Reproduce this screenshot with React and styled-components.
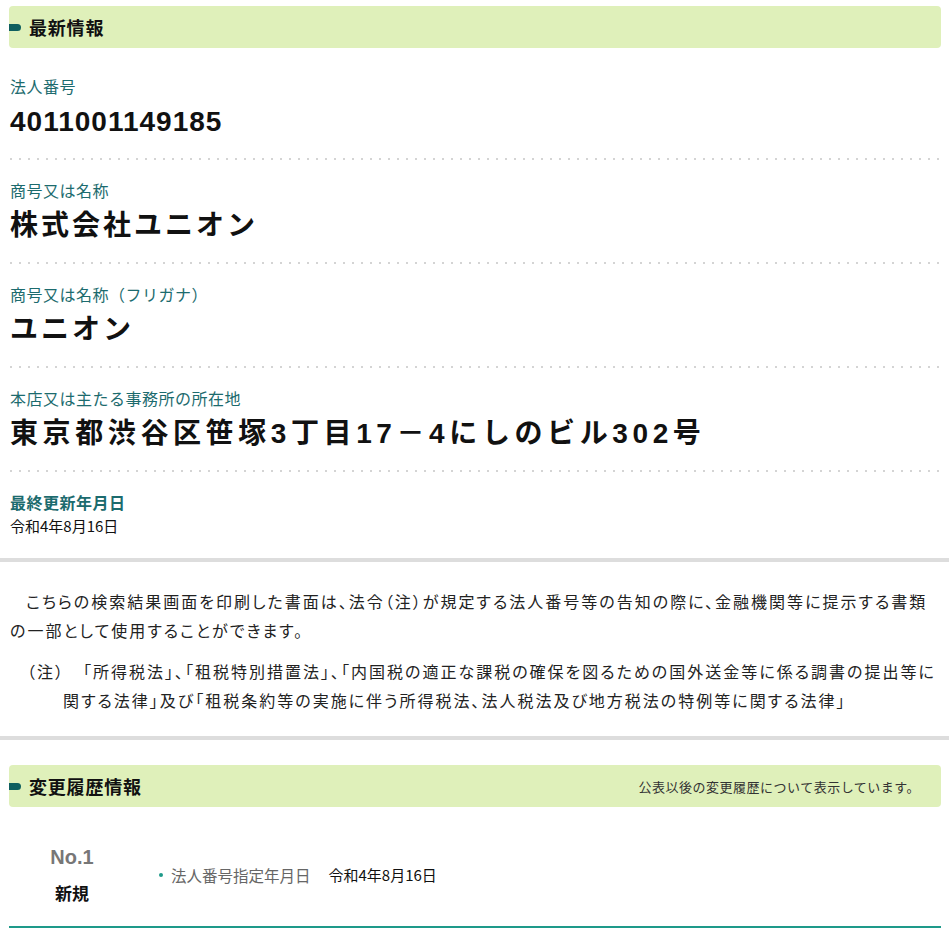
import React from "react";
import styled, { createGlobalStyle } from "styled-components";

// Global
const GlobalStyle = createGlobalStyle`
    body {
        margin: 0;
        background: #fff;
        color: #111;
        font-family: "Noto Sans CJK JP", sans-serif;
    }
`;

const fields = [
    { label: "法人番号", value: "4011001149185", spacing: 1 },
    { label: "商号又は名称", value: "株式会社ユニオン", spacing: 3 },
    { label: "商号又は名称（フリガナ）", value: "ユニオン", spacing: 3 },
    {
        label: "本店又は主たる事務所の所在地",
        value: "東京都渋谷区笹塚3丁目17－4にしのビル302号",
        spacing: 4.6,
    },
];

const App = () => {
    return (
        <>
            <GlobalStyle />
            <Page>
                <Section>
                    <SectionHead>
                        <Marker />
                        <HeadTitle>最新情報</HeadTitle>
                    </SectionHead>

                    <FieldList>
                        {fields.map((field) => (
                            <Field key={field.label}>
                                <Label>{field.label}</Label>
                                <Value $spacing={field.spacing}>{field.value}</Value>
                            </Field>
                        ))}
                        <Field $last>
                            <Label $bold>最終更新年月日</Label>
                            <DateText>令和4年8月16日</DateText>
                        </Field>
                    </FieldList>
                </Section>

                <Divider />

                <Notice>
                    <Lead>
                        こちらの検索結果画面を印刷した書面は、法令（注）が規定する法人番号等の告知の際に、金融機関等に提示する書類
                        <br />
                        の一部として使用することができます。
                    </Lead>
                    <Note>
                        （注）　「所得税法」、「租税特別措置法」、「内国税の適正な課税の確保を図るための国外送金等に係る調書の提出等に
                        <br />
                        関する法律」及び「租税条約等の実施に伴う所得税法、法人税法及び地方税法の特例等に関する法律」
                    </Note>
                </Notice>

                <Divider />

                <Section $top={25}>
                    <SectionHead>
                        <Marker />
                        <HeadTitle>変更履歴情報</HeadTitle>
                        <HeadNote>公表以後の変更履歴について表示しています。</HeadNote>
                    </SectionHead>

                    <HistoryRow>
                        <HistoryNo>
                            <NoText>No.1</NoText>
                            <KindText>新規</KindText>
                        </HistoryNo>
                        <HistoryItems>
                            <HistoryItem>
                                <ItemLabel>法人番号指定年月日</ItemLabel>
                                <ItemValue>令和4年8月16日</ItemValue>
                            </HistoryItem>
                        </HistoryItems>
                    </HistoryRow>
                </Section>
            </Page>
        </>
    );
};

const Page = styled.div`
    width: 949px;
`;

const Section = styled.section`
    padding: ${(p) => p.$top || 6}px 8px 0 9px;
`;

const SectionHead = styled.div`
    display: flex;
    align-items: center;
    height: 42px;
    background: #dff0ba;
    border-radius: 4px;
    padding-right: 21px;
`;

const Marker = styled.span`
    flex: none;
    width: 12px;
    height: 7px;
    background: #0f5f5f;
    border-radius: 0 4px 4px 0;
    margin-right: 8px;
`;

const HeadTitle = styled.h2`
    flex: 1;
    margin: 0;
    font-size: 18px;
    letter-spacing: 0.8px;
    font-weight: bold;
    color: #111;
`;

const HeadNote = styled.span`
    font-size: 13px;
    letter-spacing: 0.5px;
    color: #333;
`;

const FieldList = styled.div`
    margin-top: 10px;
`;

const Field = styled.div`
    display: flex;
    flex-direction: column;
    padding: 18px 0 ${(p) => (p.$last ? 22 : 20)}px 1px;
    background-image: ${(p) =>
        p.$last ? "none" : "linear-gradient(to right, #d4d4d4 2px, transparent 2px)"};
    background-size: 9px 2px;
    background-repeat: repeat-x;
    background-position: 1px bottom;
    border-bottom: ${(p) => (p.$last ? "none" : "2px solid transparent")};
`;

const Label = styled.div`
    font-size: 16px;
    line-height: 20px;
    letter-spacing: 0.5px;
    color: #1c6b6e;
    font-weight: ${(p) => (p.$bold ? "bold" : "normal")};
`;

const Value = styled.div`
    margin-top: 8px;
    font-family: "Liberation Sans", "Noto Sans CJK JP", sans-serif;
    font-size: 28px;
    line-height: 36px;
    font-weight: bold;
    letter-spacing: ${(p) => p.$spacing}px;
    color: #111;
`;

const DateText = styled.div`
    margin-top: 4px;
    font-size: 15px;
    line-height: 20px;
    color: #111;
`;

const Divider = styled.hr`
    margin: 0;
    border: none;
    height: 4px;
    background: #dddddd;
`;

const Notice = styled.div`
    padding: 25px 10px 21px 10px;
    font-size: 16px;
    line-height: 29px;
    color: #222;
    font-feature-settings: "palt";
    letter-spacing: 2px;
    white-space: nowrap;
`;

const Lead = styled.p`
    margin: 0;
    text-indent: 1em;
`;

const Note = styled.p`
    margin: 12px 0 0;
    padding-left: 53px;
    text-indent: -36px;
`;

const HistoryRow = styled.div`
    display: flex;
    align-items: center;
    padding: 38px 0 22px;
    border-bottom: 2px solid #1e9a8a;
`;

const HistoryNo = styled.div`
    width: 126px;
    display: flex;
    flex-direction: column;
    align-items: center;
    gap: 13px;
`;

const NoText = styled.div`
    font-family: "Liberation Sans", sans-serif;
    font-size: 20px;
    line-height: 24px;
    font-weight: bold;
    color: #777;
`;

const KindText = styled.div`
    font-size: 17px;
    line-height: 22px;
    font-weight: bold;
    color: #111;
`;

const HistoryItems = styled.ul`
    margin: 0;
    padding: 0 0 0 22px;
    list-style: none;
`;

const HistoryItem = styled.li`
    display: flex;
    align-items: center;
    gap: 18px;
    position: relative;
    padding-left: 14px;

    &::before {
        content: "";
        position: absolute;
        left: 2px;
        top: 50%;
        width: 4px;
        height: 4px;
        margin-top: -2px;
        border-radius: 50%;
        background: #1e9a8a;
    }
`;

const ItemLabel = styled.span`
    font-size: 15.5px;
    color: #666;
`;

const ItemValue = styled.span`
    font-size: 15px;
    color: #111;
`;

export default App;
